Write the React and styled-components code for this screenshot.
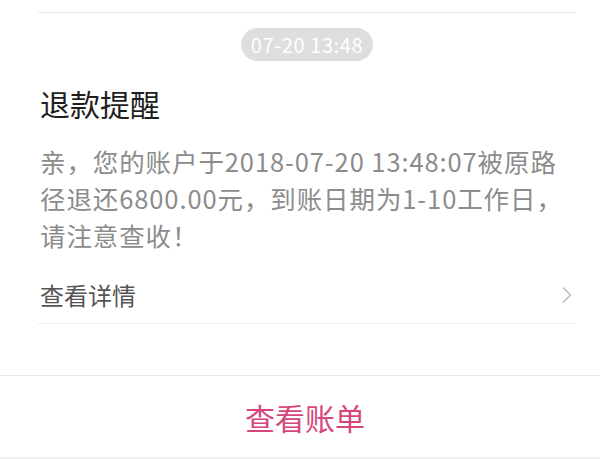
import styled, { createGlobalStyle } from 'styled-components';

const GlobalStyle = createGlobalStyle`
   html, body {
      margin: 0;
      padding: 0;
      background: #ffffff;
   }
   body {
      font-family: "Noto Sans CJK SC", "Noto Sans", sans-serif;
   }
`

const Page = styled.div`
   width: 600px;
   height: 459px;
   display: flex;
   flex-direction: column;
   background: #ffffff;
   overflow: hidden;
`

const Message = styled.section`
   padding: 0 24px 0 38px;
   flex: 1;
`

const TopRule = styled.div`
   height: 1px;
   background: #ececec;
   margin-top: 12px;
`

const TimeRow = styled.div`
   display: flex;
   justify-content: center;
   margin-top: 15px;
`

const TimePill = styled.span`
   display: inline-flex;
   align-items: center;
   height: 33px;
   padding: 0 10px;
   border-radius: 17px;
   background: #dedede;
   color: #ffffff;
   font-size: 20px;
   letter-spacing: 0.6px;
`

const Title = styled.h2`
   margin: 24px 0 0 2px;
   font-size: 30px;
   line-height: 36px;
   font-weight: 400;
   color: #1e1e1e;
`

const Body = styled.p`
   margin: 21px 0 0 2px;
   font-size: 25.5px;
   line-height: 37px;
   letter-spacing: 0.9px;
   color: #8c8c8c;
   white-space: nowrap;
`

const DetailRow = styled.div`
   display: flex;
   align-items: center;
   justify-content: space-between;
   margin-top: 27px;
   padding: 0 0 13px 2px;
   line-height: 30px;
   font-size: 24px;
   color: #555555;
   border-bottom: 1px solid #ededed;

   svg {
      margin-right: 4px;
   }
`

const Footer = styled.button`
   display: flex;
   align-items: center;
   justify-content: center;
   width: 100%;
   height: 82px;
   padding: 0 0 0 10px;
   border: none;
   border-top: 1px solid #e6e6e6;
   background: #ffffff;
   font-family: inherit;
   font-size: 30px;
   color: #d6467b;
   cursor: pointer;
`

const BottomStrip = styled.div`
   height: 2px;
   background: #f0f0f0;
`

const Chevron = () => (
   <svg width="10" height="16" viewBox="0 0 10 16" fill="none">
      <path d="M1.5 1 L8.5 8 L1.5 15" stroke="#bdbdbd" strokeWidth="1.6" strokeLinecap="round" strokeLinejoin="round" />
   </svg>
)

export default function App() {
   return (
      <>
         <GlobalStyle />
         <Page>
            <Message>
               <TopRule />
               <TimeRow>
                  <TimePill>07-20 13:48</TimePill>
               </TimeRow>
               <Title>退款提醒</Title>
               <Body>
                  亲，您的账户于2018-07-20 13:48:07被原路<br />
                  径退还6800.00元，到账日期为1-10工作日，<br />
                  请注意查收！
               </Body>
               <DetailRow>
                  <span>查看详情</span>
                  <Chevron />
               </DetailRow>
            </Message>
            <Footer>查看账单</Footer>
            <BottomStrip />
         </Page>
      </>
   )
}
